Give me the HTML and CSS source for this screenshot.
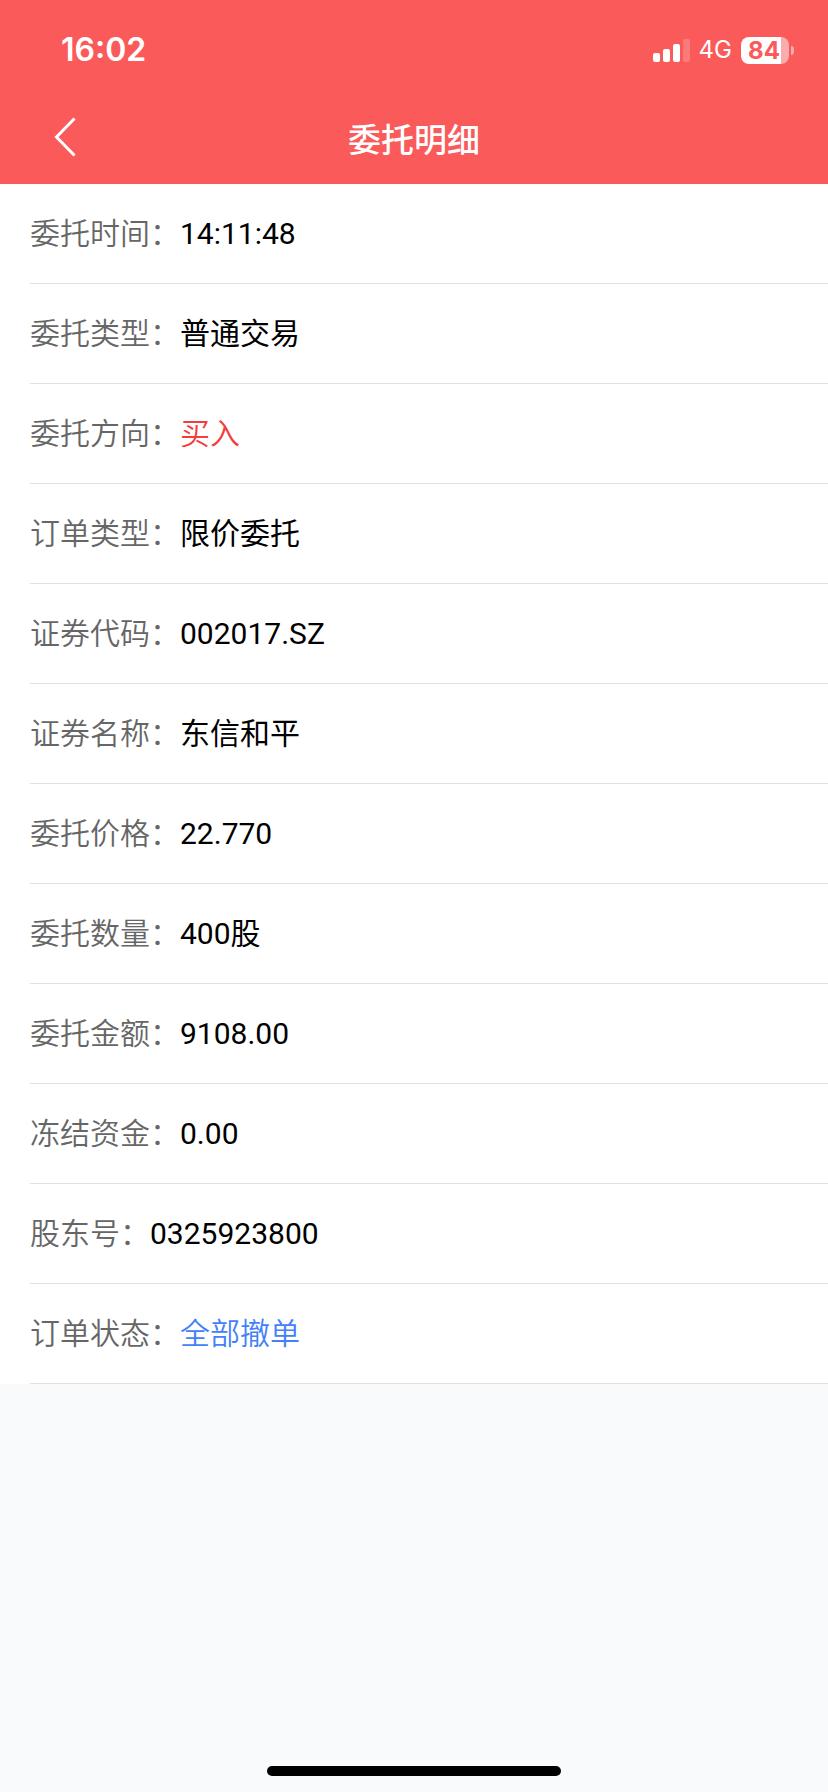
FILE: index.html
```html
<!DOCTYPE html>
<html lang="zh-CN">
<head>
<meta charset="utf-8">
<meta name="viewport" content="width=device-width, initial-scale=1">
<title>委托明细</title>
<link rel="stylesheet" href="styles.css">
</head>
<body>
<header class="header">
  <div class="status-bar">
    <time class="clock">16:02</time>
    <div class="indicators">
      <svg class="signal" width="37" height="23" viewBox="0 0 37 23" fill="#fff" aria-hidden="true">
        <rect x="0" y="14" width="7" height="9" rx="2"/>
        <rect x="10" y="10" width="7" height="13" rx="2"/>
        <rect x="20" y="5" width="7" height="18" rx="2"/>
        <rect x="30" y="0" width="7" height="23" rx="2" opacity=".2"/>
      </svg>
      <span class="network">4G</span>
      <div class="battery"><span class="battery-level">84</span><i class="battery-cap"></i></div>
    </div>
  </div>
  <div class="nav-bar">
    <button class="back" type="button" aria-label="返回">
      <svg width="22" height="40" viewBox="0 0 22 40" fill="none" stroke="#fff" stroke-width="3" aria-hidden="true"><path d="M20.500 1.500 2.500 20l18 18.500"/></svg>
    </button>
    <h1 class="title">委托明细</h1>
  </div>
</header>
<main class="content">
  <dl class="details">
    <div class="row"><dt class="label">委托时间：</dt><dd class="value">14:11:48</dd></div>
    <div class="row"><dt class="label">委托类型：</dt><dd class="value">普通交易</dd></div>
    <div class="row"><dt class="label">委托方向：</dt><dd class="value buy">买入</dd></div>
    <div class="row"><dt class="label">订单类型：</dt><dd class="value">限价委托</dd></div>
    <div class="row"><dt class="label">证券代码：</dt><dd class="value">002017.SZ</dd></div>
    <div class="row"><dt class="label">证券名称：</dt><dd class="value">东信和平</dd></div>
    <div class="row"><dt class="label">委托价格：</dt><dd class="value">22.770</dd></div>
    <div class="row"><dt class="label">委托数量：</dt><dd class="value">400股</dd></div>
    <div class="row"><dt class="label">委托金额：</dt><dd class="value">9108.00</dd></div>
    <div class="row"><dt class="label">冻结资金：</dt><dd class="value">0.00</dd></div>
    <div class="row"><dt class="label">股东号：</dt><dd class="value">0325923800</dd></div>
    <div class="row"><dt class="label">订单状态：</dt><dd class="value cancelled">全部撤单</dd></div>
  </dl>
</main>
<footer class="home"><div class="home-bar"></div></footer>
</body>
</html>
```
FILE: styles.css
```css
* {
  box-sizing: border-box;
}

body {
  margin: 0;
  min-height: 100vh;
  display: flex;
  flex-direction: column;
  background: #f9fafc;
  font-family: Roboto, "Noto Sans CJK SC", sans-serif;
  color: #000;
}

.header {
  background: #fa5a5a;
  color: #fff;
}

.status-bar {
  display: flex;
  align-items: center;
  justify-content: space-between;
  height: 92px;
  padding: 8px 34px 0 61px;
  font-family: Inter, sans-serif;
}

.clock {
  font-size: 32px;
  line-height: 40px;
  font-weight: 600;
}

.indicators {
  display: flex;
  align-items: center;
  gap: 9px;
}

.network {
  font-size: 24px;
  line-height: 28px;
}

.battery {
  display: flex;
  align-items: center;
  gap: 2px;
}

.battery-level {
  width: 48px;
  padding-right: 2px;
  border-radius: 8px;
  background: linear-gradient(to right, #fff 84%, #fcacac 84%);
  color: #fa5a5a;
  font-size: 24px;
  line-height: 27px;
  font-weight: 700;
  text-align: center;
}

.battery-cap {
  width: 3px;
  height: 9px;
  border-radius: 0 4px 4px 0;
  background: #fcacac;
}

.nav-bar {
  display: grid;
  grid-template-columns: 100px 1fr 100px;
  align-items: center;
  height: 92px;
}

.back {
  display: flex;
  padding: 0 0 2px 54px;
  border: 0;
  background: none;
}

.title {
  margin: 0;
  padding-top: 6px;
  font-size: 33px;
  line-height: 48px;
  font-weight: 500;
  text-align: center;
}

.details {
  margin: 0;
  background: #fff;
}

.row {
  display: flex;
  align-items: center;
  height: 100px;
  margin-left: 30px;
  border-bottom: 1px solid #e0e0e0;
  font-size: 30px;
  line-height: 44px;
}

.label {
  color: #666;
  font-weight: 350;
}

.value {
  margin: 0;
}

.buy {
  color: #f53d3d;
  font-weight: 350;
}

.cancelled {
  color: #4381f8;
  font-weight: 350;
}

.home {
  margin-top: auto;
  padding: 16px;
}

.home-bar {
  width: 37%;
  height: 10px;
  margin: 0 auto;
  border-radius: 5px;
  background: #000;
}
```
